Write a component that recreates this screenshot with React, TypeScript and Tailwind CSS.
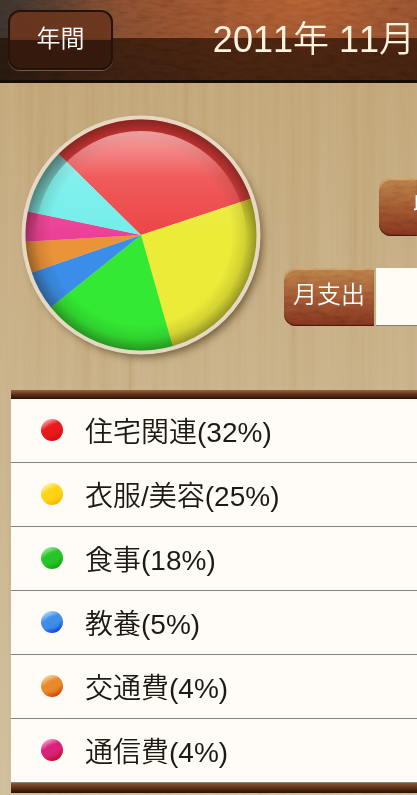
import React from 'react';

const slices = [
  { label: '住宅関連', percent: 32, start: 314.6, end: 431.7, color: '#ed4546' },
  { label: '衣服/美容', percent: 25, start: 71.7, end: 164.1, color: '#ebeb38' },
  { label: '食事', percent: 18, start: 164.1, end: 231.3, color: '#33e933' },
  { label: '教養', percent: 5, start: 231.3, end: 251.1, color: '#3a8eea' },
  { label: '交通費', percent: 4, start: 251.1, end: 266.7, color: '#ea9339' },
  { label: '通信費', percent: 4, start: 266.7, end: 281.8, color: '#ec4096' },
  { label: '', percent: 12, start: 281.8, end: 314.6, color: '#72eeea' },
];

const balls = [
  ['#e81a1c', '#cf0a10', '#f6b0b0'],
  ['#ffd414', '#ffae00', '#fff3b0'],
  ['#27c427', '#0fa312', '#a5eaa5'],
  ['#3f8fe8', '#0b3fe0', '#b5dcfa'],
  ['#e88a2c', '#d43a00', '#f8d5a5'],
  ['#d8227c', '#c00a1c', '#f3a8cc'],
];

const point = (angle: number, r: number) => {
  const rad = ((angle - 90) * Math.PI) / 180;
  return `${120 + r * Math.cos(rad)} ${120 + r * Math.sin(rad)}`;
};

const PieChart = () => (
  <svg viewBox="0 0 240 240" className="block size-60 shrink-0 overflow-visible" role="img">
    <defs>
      <radialGradient id="rim" cx="50%" cy="50%" r="50%">
        <stop offset="0.78" stopColor="#1a1408" stopOpacity="0" />
        <stop offset="0.9" stopColor="#1a1408" stopOpacity="0.12" />
        <stop offset="1" stopColor="#1a1408" stopOpacity="0.4" />
      </radialGradient>
      <linearGradient id="gloss" x1="0" y1="0" x2="0" y2="1">
        <stop offset="0" stopColor="#fff" stopOpacity="0.5" />
        <stop offset="0.13" stopColor="#fff" stopOpacity="0.28" />
        <stop offset="0.22" stopColor="#fff" stopOpacity="0.12" />
        <stop offset="0.5" stopColor="#fff" stopOpacity="0" />
      </linearGradient>
      <linearGradient id="shade" x1="0" y1="0" x2="0" y2="1">
        <stop offset="0" stopColor="#800" stopOpacity="0.3" />
        <stop offset="0.35" stopColor="#600" stopOpacity="0.12" />
        <stop offset="0.5" stopColor="#600" stopOpacity="0" />
      </linearGradient>
      <filter id="drop" x="-20%" y="-20%" width="150%" height="150%">
        <feGaussianBlur stdDeviation="4" />
      </filter>
    </defs>
    <circle cx="124" cy="125" r="117" fill="#4a3818" opacity="0.7" filter="url(#drop)" />
    <circle cx="120" cy="120" r="119.5" fill="#e6d9c3" />
    {slices.map((s) => (
      <path
        key={s.start}
        d={`M120 120 L${point(s.start, 115.5)} A115.5 115.5 0 0 1 ${point(s.end, 115.5)} Z`}
        fill={s.color}
      />
    ))}
    <path
      d="M120 4.5 A115.5 115.5 0 1 1 119.9 4.5 Z M120 16 A105 105 0 1 0 120.1 16 Z"
      fill="url(#shade)"
      fillRule="evenodd"
    />
    <circle cx="120" cy="120" r="115.5" fill="url(#rim)" />
    <circle cx="120" cy="121" r="105" fill="url(#gloss)" />
  </svg>
);

const Ball = ({ index }: { index: number }) => {
  const [base, dark, light] = balls[index];
  return (
    <svg viewBox="0 0 22 22" className="size-[22px] shrink-0" aria-hidden="true">
      <defs>
        <linearGradient id={`ball${index}`} x1="0.2" y1="0.05" x2="0.7" y2="1">
          <stop offset="0" stopColor={light} />
          <stop offset="0.35" stopColor={base} />
          <stop offset="0.6" stopColor={base} />
          <stop offset="1" stopColor={dark} />
        </linearGradient>
      </defs>
      <circle cx="11" cy="11" r="11" fill={`url(#ball${index})`} />
      <circle cx="11.5" cy="11.5" r="7" fill={base} opacity="0.5" />
    </svg>
  );
};

const Leather = () => (
  <svg className="pointer-events-none absolute inset-0 size-full opacity-15 mix-blend-overlay" aria-hidden="true">
    <filter id="leather">
      <feTurbulence type="fractalNoise" baseFrequency="0.08 0.25" numOctaves="4" seed="4" />
      <feColorMatrix type="saturate" values="0" />
      <feComponentTransfer>
        <feFuncR type="linear" slope="2" intercept="-0.4" />
        <feFuncG type="linear" slope="2" intercept="-0.4" />
        <feFuncB type="linear" slope="2" intercept="-0.4" />
        <feFuncA type="linear" slope="0" intercept="1" />
      </feComponentTransfer>
    </filter>
    <rect width="100%" height="100%" filter="url(#leather)" />
  </svg>
);

const WoodGrain = () => (
  <svg className="pointer-events-none absolute inset-0 size-full opacity-8 mix-blend-overlay" aria-hidden="true">
    <filter id="wood">
      <feTurbulence type="fractalNoise" baseFrequency="0.12 0.002" numOctaves="4" seed="8" />
      <feColorMatrix type="saturate" values="0" />
      <feComponentTransfer>
        <feFuncR type="linear" slope="2" intercept="-0.5" />
        <feFuncG type="linear" slope="2" intercept="-0.5" />
        <feFuncB type="linear" slope="2" intercept="-0.5" />
        <feFuncA type="linear" slope="0" intercept="1" />
      </feComponentTransfer>
    </filter>
    <rect width="100%" height="100%" filter="url(#wood)" />
  </svg>
);

const Header = () => (
  <header className="relative overflow-hidden border-b-3 border-[#170c06] bg-[linear-gradient(to_bottom,transparent_38px,#1c0a00a8_38px),radial-gradient(ellipse_240px_110px_at_300px_0px,#ad5a30,#8c4c2c_55%,transparent),linear-gradient(to_right,#38302a,#70452e_120px,#7c472c)]">
    <Leather />
    <div className="relative flex h-20 items-center justify-between whitespace-nowrap pl-2">
      <button className="h-[60px] w-[105px] shrink-0 rounded-xl border-2 border-[#25130b] bg-[linear-gradient(to_bottom,#6b351de0_28px,#35190ce0_28px)] pb-0.5 text-2xl font-[350] text-white shadow-[0_1px_0_#6e5a4c]">
        年間
      </button>
      <h1 className="shrink-0 pr-0.5 text-4xl font-[350] text-[#fff3df] [font-kerning:none]">2011年 11月</h1>
    </div>
  </header>
);

const leatherTab =
  'relative flex h-[58px] shrink-0 items-center overflow-hidden bg-linear-to-b from-[#b47a45] via-[#9b5430] to-[#77301b] pb-1 text-2xl font-[350] whitespace-nowrap text-white shadow-[inset_0_2px_1px_#dbb68299,inset_0_-1px_1px_#40160a]';

const App = () => (
  <div className="relative overflow-hidden bg-linear-to-b from-[#c0a373] via-[#c8b087] to-[#cfbd98] font-[Liberation_Sans,Noto_Sans_CJK_JP,sans-serif] text-[#1e1a12]">
    <WoodGrain />
    <div className="relative">
      <Header />

      <section className="flex gap-[23px] pt-8 pl-[21px]">
        <PieChart />
        <div className="flex min-w-0 flex-1 flex-col gap-8 overflow-hidden pt-[63px]">
          <div className="flex justify-end">
            <div className={`${leatherTab} w-[38px] rounded-l-xl pl-[34px]`}>
              <Leather />
              <span className="relative">収支</span>
            </div>
          </div>
          <div className="flex gap-0.5">
            <label htmlFor="spending" className={`${leatherTab} w-[90px] justify-center rounded-l-xl`}>
              <Leather />
              <span className="relative">月支出</span>
            </label>
            <input
              id="spending"
              readOnly
              className="h-[58px] min-w-0 flex-1 border-b border-[#8d7d64] bg-[#fffbf5] outline-none"
            />
          </div>
        </div>
      </section>

      <section className="mt-[35px] ml-[11px] bg-[#fffbf6]">
        <div className="h-[9px] bg-linear-to-b from-[#9a6240] via-[#5c3018] to-[#2b1206]" />
        <ul>
          {slices.slice(0, 6).map((s, i) => (
            <li key={s.label} className="flex h-16 items-start gap-[22px] border-b border-[#868482] pt-5 pl-[30px]">
              <Ball index={i} />
              <span className="text-[28px] leading-7 font-[350] whitespace-nowrap [font-kerning:none]">
                {s.label}({s.percent}%)
              </span>
            </li>
          ))}
        </ul>
        <div className="h-[10px] bg-linear-to-b from-[#8a5636] via-[#5c3018] to-[#2b1206]" />
      </section>
      <div className="h-1" />
    </div>
  </div>
);

export default App;
